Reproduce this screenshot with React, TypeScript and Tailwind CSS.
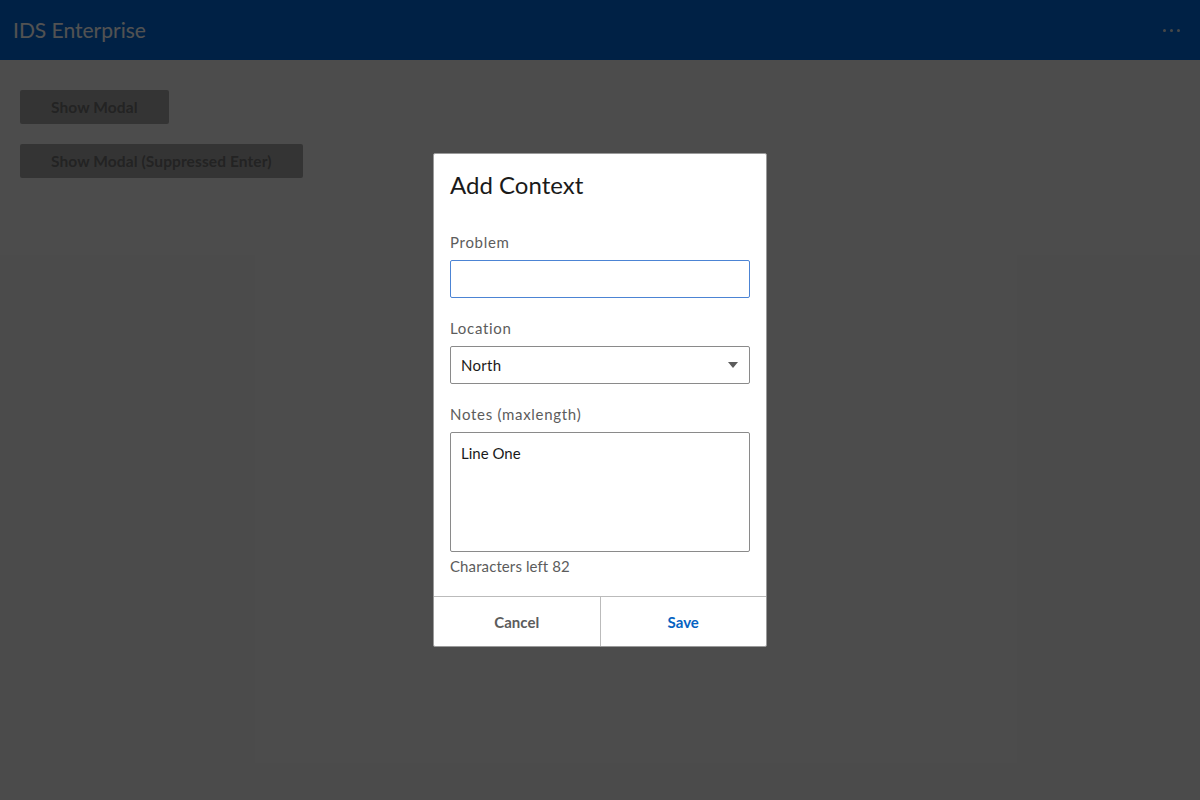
import React from "react";

export default function App() {
  const [problem, setProblem] = React.useState("");
  const [notes, setNotes] = React.useState("Line One");
  const max = 90;

  return (
    <div
      className="relative min-h-screen h-[800px] bg-[#dedede] overflow-hidden"
      style={{ fontFamily: "Lato, 'Open Sans', sans-serif" }}
    >
      {/* Header */}
      <header className="h-[60px] bg-[#0062c9] flex items-center justify-between pl-[13px] pr-[20px]">
        <span className="text-[21px] text-[#f0f0f0]">IDS Enterprise</span>
        <div className="flex items-center gap-[4px] pt-[1px]">
          <span className="w-[3px] h-[3px] rounded-full bg-[#d0d0d0]" />
          <span className="w-[3px] h-[3px] rounded-full bg-[#d0d0d0]" />
          <span className="w-[3px] h-[3px] rounded-full bg-[#d0d0d0]" />
        </div>
      </header>

      {/* Page content */}
      <main className="px-[20px] pt-[30px] flex flex-col items-start gap-[20px]">
        <button className="h-[34px] pt-[1px] px-[31px] rounded-[2px] bg-[#9a9a9a] text-[#666] text-[15.5px] font-bold tracking-[0.1px]">
          Show Modal
        </button>
        <button className="h-[34px] pt-[1px] px-[31px] rounded-[2px] bg-[#9a9a9a] text-[#666] text-[15.5px] font-bold tracking-[0.1px]">
          Show Modal (Suppressed Enter)
        </button>
      </main>

      {/* Overlay */}
      <div className="absolute inset-0 bg-black/[0.66]" />

      {/* Modal */}
      <div className="absolute left-[433px] top-[153px] w-[334px] bg-white border border-[#9a9a9a] rounded-[2px]">
        <div className="px-[16px] pt-[16px] pb-[20px]">
          <h1 className="text-[24px] leading-[30px] text-[#1a1a1a]">Add Context</h1>

          <div className="mt-[32px]">
            <label className="block text-[15px] tracking-[0.7px] leading-[20px] text-[#5c5c5c] mb-[8px]">Problem</label>
            <input
              value={problem}
              onChange={(e) => setProblem(e.target.value)}
              className="w-full h-[38px] px-[10px] border border-[#4c84d4] rounded-[2px] outline-none text-[15px]"
            />
          </div>

          <div className="mt-[20px]">
            <label className="block text-[15px] tracking-[0.7px] leading-[20px] text-[#5c5c5c] mb-[8px]">Location</label>
            <div className="relative w-full h-[38px] border border-[#8a8a8a] rounded-[2px] flex items-center px-[10px]">
              <span className="text-[15px] tracking-[0.3px] text-[#1a1a1a]">North</span>
              <svg className="absolute right-[11px] top-[15px]" width="10" height="6" viewBox="0 0 10 6">
                <path d="M0 0h10L5 6z" fill="#5c5c5c" />
              </svg>
            </div>
          </div>

          <div className="mt-[20px]">
            <label className="block text-[15px] tracking-[0.7px] leading-[20px] text-[#5c5c5c] mb-[8px]">Notes (maxlength)</label>
            <textarea
              value={notes}
              maxLength={max}
              onChange={(e) => setNotes(e.target.value)}
              className="block w-full h-[120px] px-[10px] pt-[10px] pb-[8px] border border-[#8a8a8a] rounded-[2px] outline-none resize-none text-[15px] leading-[20px] text-[#1a1a1a]"
            />
            <p className="mt-[4px] text-[15px] tracking-[0.1px] leading-[20px] text-[#5c5c5c]">
              Characters left {max - notes.length}
            </p>
          </div>
        </div>

        <div className="flex border-t border-[#bbbbbb] h-[50px]">
          <button className="flex-1 pt-[1px] text-[15px] font-bold text-[#5c5c5c]">Cancel</button>
          <button className="flex-1 pt-[1px] border-l border-[#bbbbbb] text-[15px] font-bold text-[#0563c2]">Save</button>
        </div>
      </div>
    </div>
  );
}
